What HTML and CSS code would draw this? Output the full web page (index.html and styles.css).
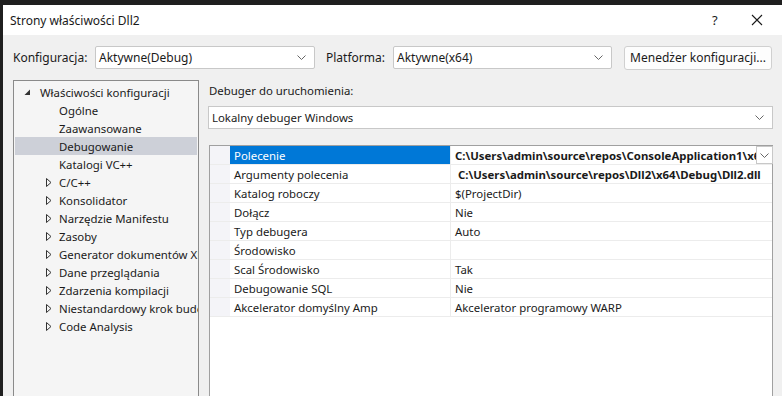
FILE: index.html
```html
<!DOCTYPE html>
<html lang="pl">
<head>
<meta charset="utf-8">
<link rel="stylesheet" href="styles.css">
</head>
<body>
<div class="window">
  <div class="titlebar">
    <span class="title">Strony właściwości Dll2</span>
    <span class="help">?</span>
    <span class="close"><svg width="12" height="12" viewBox="0 0 12 12"><path d="M1 1L11 11M11 1L1 11" stroke="#1a1a1a" stroke-width="1.1" fill="none"/></svg></span>
  </div>
  <div class="configbar">
    <span class="lbl">Konfiguracja:</span>
    <div class="combo combo-config"><span>Aktywne(Debug)</span><svg class="chev" width="9" height="5" viewBox="0 0 9 5"><path d="M0.5 0.5L4.5 4.5L8.5 0.5" stroke="#666" fill="none"/></svg></div>
    <span class="lbl lbl-plat">Platforma:</span>
    <div class="combo combo-plat"><span>Aktywne(x64)</span><svg class="chev" width="9" height="5" viewBox="0 0 9 5"><path d="M0.5 0.5L4.5 4.5L8.5 0.5" stroke="#666" fill="none"/></svg></div>
    <div class="btn">Menedżer konfiguracji...</div>
  </div>
  <div class="main">
    <div class="tree">
      <div class="node top"><svg class="exp" width="7" height="7" viewBox="0 0 7 7"><path d="M6 0.5V6H0.5Z" fill="#333"/></svg><span>Właściwości konfiguracji</span></div>
      <div class="node leaf">Ogólne</div>
      <div class="node leaf">Zaawansowane</div>
      <div class="node leaf sel">Debugowanie</div>
      <div class="node leaf">Katalogi VC++</div>
      <div class="node col"><svg class="tri" width="6" height="9" viewBox="0 0 6 9"><path d="M0.5 0.5L5 4.5L0.5 8.5Z" stroke="#333" fill="none"/></svg><span>C/C++</span></div>
      <div class="node col"><svg class="tri" width="6" height="9" viewBox="0 0 6 9"><path d="M0.5 0.5L5 4.5L0.5 8.5Z" stroke="#333" fill="none"/></svg><span>Konsolidator</span></div>
      <div class="node col"><svg class="tri" width="6" height="9" viewBox="0 0 6 9"><path d="M0.5 0.5L5 4.5L0.5 8.5Z" stroke="#333" fill="none"/></svg><span>Narzędzie Manifestu</span></div>
      <div class="node col"><svg class="tri" width="6" height="9" viewBox="0 0 6 9"><path d="M0.5 0.5L5 4.5L0.5 8.5Z" stroke="#333" fill="none"/></svg><span>Zasoby</span></div>
      <div class="node col"><svg class="tri" width="6" height="9" viewBox="0 0 6 9"><path d="M0.5 0.5L5 4.5L0.5 8.5Z" stroke="#333" fill="none"/></svg><span>Generator dokumentów XML</span></div>
      <div class="node col"><svg class="tri" width="6" height="9" viewBox="0 0 6 9"><path d="M0.5 0.5L5 4.5L0.5 8.5Z" stroke="#333" fill="none"/></svg><span>Dane przeglądania</span></div>
      <div class="node col"><svg class="tri" width="6" height="9" viewBox="0 0 6 9"><path d="M0.5 0.5L5 4.5L0.5 8.5Z" stroke="#333" fill="none"/></svg><span>Zdarzenia kompilacji</span></div>
      <div class="node col"><svg class="tri" width="6" height="9" viewBox="0 0 6 9"><path d="M0.5 0.5L5 4.5L0.5 8.5Z" stroke="#333" fill="none"/></svg><span>Niestandardowy krok budowania</span></div>
      <div class="node col"><svg class="tri" width="6" height="9" viewBox="0 0 6 9"><path d="M0.5 0.5L5 4.5L0.5 8.5Z" stroke="#333" fill="none"/></svg><span>Code Analysis</span></div>
    </div>
    <div class="right">
      <div class="dbg-label">Debuger do uruchomienia:</div>
      <div class="combo combo-dbg"><span>Lokalny debuger Windows</span><svg class="chev" width="9" height="5" viewBox="0 0 9 5"><path d="M0.5 0.5L4.5 4.5L8.5 0.5" stroke="#666" fill="none"/></svg></div>
      <div class="grid">
        <div class="row"><div class="gut"></div><div class="name selname">Polecenie</div><div class="val bold clip">C:\Users\admin\source\repos\ConsoleApplication1\x64\Debug\ConsoleApplication1.exe</div><div class="ddbtn"><svg width="9" height="5" viewBox="0 0 9 5"><path d="M0.5 0.5L4.5 4.5L8.5 0.5" stroke="#666" fill="none"/></svg></div></div>
        <div class="row"><div class="gut"></div><div class="name">Argumenty polecenia</div><div class="val bold indent">C:\Users\admin\source\repos\Dll2\x64\Debug\Dll2.dll</div></div>
        <div class="row"><div class="gut"></div><div class="name">Katalog roboczy</div><div class="val">$(ProjectDir)</div></div>
        <div class="row"><div class="gut"></div><div class="name">Dołącz</div><div class="val">Nie</div></div>
        <div class="row"><div class="gut"></div><div class="name">Typ debugera</div><div class="val">Auto</div></div>
        <div class="row"><div class="gut"></div><div class="name">Środowisko</div><div class="val"></div></div>
        <div class="row"><div class="gut"></div><div class="name">Scal Środowisko</div><div class="val">Tak</div></div>
        <div class="row"><div class="gut"></div><div class="name">Debugowanie SQL</div><div class="val">Nie</div></div>
        <div class="row"><div class="gut"></div><div class="name">Akcelerator domyślny Amp</div><div class="val">Akcelerator programowy WARP</div></div>
        <div class="rest"></div>
      </div>
    </div>
  </div>
</div>
</body>
</html>
```
FILE: styles.css
```css
* { box-sizing: border-box; }
html, body { margin: 0; padding: 0; }
body {
  width: 782px; height: 396px; overflow: hidden;
  background: #1f1f1f;
  font-family: "Noto Sans", "Open Sans", sans-serif;
  font-size: 12px;
  color: #1a1a1a;
}
.window {
  margin: 5px 0 0 3px;
  height: 391px;
  background: #f0f0f0;
  display: flex; flex-direction: column;
  overflow: hidden;
}
.titlebar {
  height: 30px; background: #fff;
  display: flex; align-items: center;
  padding-left: 7px;
}
.title { flex: 1; }
.help { width: 39px; font-size: 13px; }
.close { width: 31px; display: flex; align-items: center; }
.configbar {
  height: 45px;
  display: flex; align-items: center;
  padding-left: 10px;
}
.lbl { width: 82px; }
.lbl-plat { width: 67px; margin-left: 11px; }
.combo {
  height: 23px; background: #fff;
  border: 1px solid #c8c8c8; border-radius: 2px;
  display: flex; align-items: center; justify-content: space-between;
  padding: 0 8px 0 3px;
}
.combo-config { width: 220px; }
.combo-plat { width: 219px; }
.btn {
  margin-left: 12px; width: 148px; height: 24px;
  background: #fdfdfd; border: 1px solid #d0d0d0; border-radius: 3px;
  display: flex; align-items: center; justify-content: center;
}
.main { flex: 1; display: flex; padding-left: 10px; min-height: 0; font-size: 11.4px; }
.tree {
  width: 186px; flex-shrink: 0; background: #f5f5f5;
  border: 1px solid #8a8a8a; border-bottom: none;
  padding-top: 2px; padding-left: 1px; overflow: hidden;
}
.node {
  height: 18px; display: flex; align-items: center;
  white-space: nowrap; padding-left: 44px;
}
.node svg { flex-shrink: 0; }
.node.top { padding-left: 9px; }
.node.top .exp { margin-right: 9px; }
.node.col { padding-left: 31px; }
.node.col .tri { margin-right: 7px; }
.node.sel { background: #cdd0d8; width: 182px; }
.right { flex: 1; padding-left: 9px; padding-right: 9px; display: flex; flex-direction: column; }
.dbg-label { height: 19px; display: flex; align-items: center; padding-left: 1px; margin-top: 1px; }
.combo-dbg { margin-top: 6px; width: 565px; height: 23px; border-radius: 0; }
.grid {
  margin-top: 16px; margin-left: 1px; width: 564px; flex: 1;
  background: #fff; border: 1px solid #a0a0a0; border-bottom: none;
  display: flex; flex-direction: column;
}
.row { height: 19px; display: flex; border-bottom: 1px solid #ececec; flex-shrink: 0; }
.gut { width: 20px; background: #f4f4f8; flex-shrink: 0; }
.name { width: 221px; flex-shrink: 0; padding-left: 4px; display: flex; align-items: center; white-space: nowrap; border-right: 1px solid #ececec; }
.selname { background: #0078d7; color: #fff; }
.val { flex: 1; min-width: 0; padding-left: 4px; display: flex; align-items: center; white-space: nowrap; overflow: hidden; }
.bold { font-weight: bold; }
.indent { padding-left: 7px; }
.ddbtn {
  width: 17px; height: 18px; flex-shrink: 0; border: 1px solid #c8c8c8; background: #fff;
  display: flex; align-items: center; justify-content: center; margin-right: -1px;
}
.rest { flex: 1; }
```
